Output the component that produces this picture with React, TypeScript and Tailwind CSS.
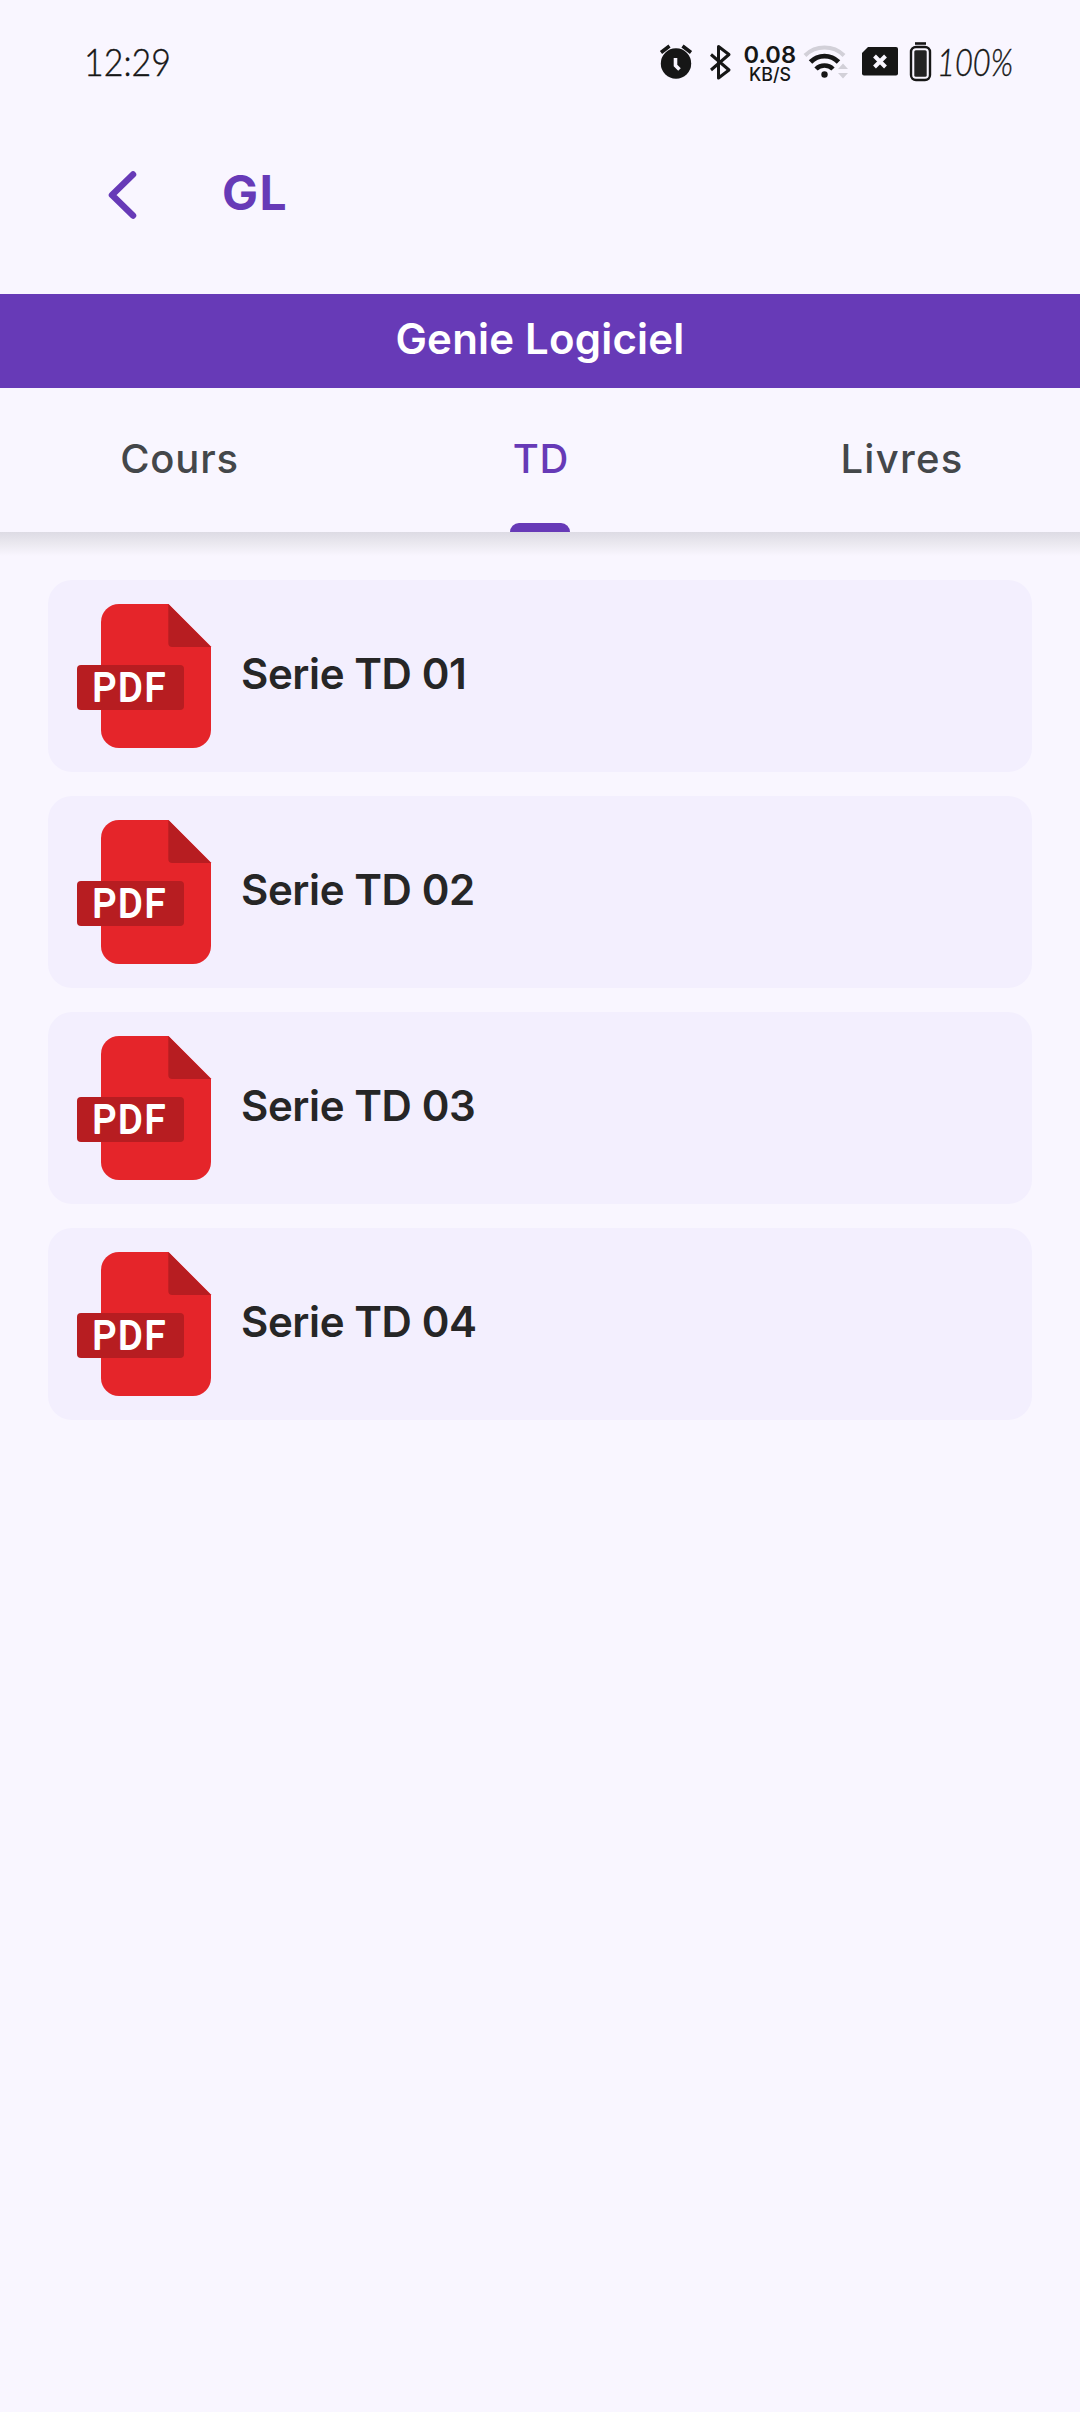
import React from "react";

const series = ["Serie TD 01", "Serie TD 02", "Serie TD 03", "Serie TD 04"];

function StatusIcons() {
  return (
    <svg className="block h-[80px] w-[390px]" viewBox="655 20 390 80" fill="none">
      <g fill="#161616">
        <circle cx="676" cy="63.5" r="15.2" />
        <path d="M661 52.5l8.5-6.5M691 52.5l-8.5-6.5" stroke="#161616" strokeWidth="3.6" />
        <path d="M675.5 58v7.5l4 4" stroke="#f9f6ff" strokeWidth="3.6" />
      </g>
      <path
        d="M711 54.5l18 15.5-10.5 8V46.5l10.5 8-18 15.5"
        stroke="#161616"
        strokeWidth="3"
        strokeLinejoin="round"
      />
      <g fill="#161616" fontFamily="Inter, sans-serif">
        <text x="743.5" y="63" fontSize="23.5" fontWeight="600" textLength="52.5" lengthAdjust="spacingAndGlyphs">0.08</text>
        <text x="749" y="80.500" fontSize="18.5" fontWeight="500" textLength="42" lengthAdjust="spacingAndGlyphs">KB/S</text>
      </g>
      <path d="M805 55.5a28 28 0 0 1 39 0" stroke="#d2d0d8" strokeWidth="4" />
      <path d="M810.500 62a19.5 19.5 0 0 1 28 0" stroke="#161616" strokeWidth="4.8" />
      <path d="M816 69a12 12 0 0 1 17 0" stroke="#161616" strokeWidth="4.6" />
      <circle cx="824.500" cy="74.500" r="3.200" fill="#161616" />
      <path d="M838 69l5-5.500 5 5.500zM838 73h10l-5 5.500z" fill="#d2d0d8" />
      <path d="M868 47h28q2 0 2 2v24.500q0 2-2 2h-32q-2 0-2-2V53z" fill="#161616" />
      <path d="M874.500 56l11 11m0-11l-11 11" stroke="#f9f6ff" strokeWidth="4" />
      <path d="M915 43.500h11" stroke="#161616" strokeWidth="2.600" />
      <rect x="911" y="47" width="19" height="33" rx="5" stroke="#161616" strokeWidth="2.400" />
      <rect x="914.300" y="50.300" width="12.400" height="26.500" rx="1.500" fill="#232323" />
      <text x="937" y="76" fontFamily="Lato, sans-serif" fontStyle="italic" fontWeight="300" fontSize="37" fill="#161616" stroke="#161616" strokeWidth="0.400" textLength="76" lengthAdjust="spacingAndGlyphs">100%</text>
    </svg>
  );
}

function PdfIcon() {
  return (
    <svg className="size-36 shrink-0" viewBox="0 0 144 144">
      <path d="M47 0h49.500L139 42.500V126a18 18 0 0 1-18 18H47a18 18 0 0 1-18-18V18A18 18 0 0 1 47 0z" fill="#e5252a" />
      <path d="M96.300 0L139 43h-38.700a4 4 0 0 1-4-4z" fill="#b71d21" />
      <rect x="5" y="61" width="107" height="45" rx="4" fill="#b71d21" />
      <text x="20.500" y="97.300" fontFamily="Roboto, sans-serif" fontWeight="400" fontSize="38.500" fill="#fff" stroke="#fff" strokeWidth="1.800" strokeLinejoin="round" textLength="75" lengthAdjust="spacingAndGlyphs" letterSpacing="2.5">PDF</text>
    </svg>
  );
}

export default function App() {
  return (
    <div className="flex h-[2412px] w-[1080px] flex-col bg-[#f9f6ff] font-['Inter',sans-serif]">
      <div className="flex h-[124px] items-start justify-between pr-[35px] pl-[84px] pt-[20px]">
        <svg className="block h-[80px] w-[110px]" viewBox="84 20 110 80">
          <text x="84" y="76" fontFamily="Lato, sans-serif" fontWeight="300" fontSize="37" fill="#161616" stroke="#161616" strokeWidth="0.400" textLength="87" lengthAdjust="spacingAndGlyphs">12:29</text>
        </svg>
        <StatusIcons />
      </div>
      <header className="flex h-[170px] items-start pl-[104px] pt-[43px]">
        <svg className="h-[56px] w-[36px]" viewBox="104 167 36 56" fill="none">
          <path d="M133 174.500L112 195l21 20.500" stroke="#673ab7" strokeWidth="6.500" strokeLinecap="round" strokeLinejoin="round" />
        </svg>
        <h1 className="ml-[82px] text-[48px] leading-[52px] font-bold tracking-[1.5px] text-[#673ab7]">GL</h1>
      </header>
      <div className="flex h-[94px] items-center justify-center bg-[#673ab7] pb-[5px]">
        <h2 className="text-[42px] leading-[52px] font-semibold tracking-[0.2px] text-white">Genie Logiciel</h2>
      </div>
      <nav className="relative grid h-[144px] shrink-0 grid-cols-3 text-[40px] font-[450] tracking-[0.8px] text-[#44474a]">
        <div className="flex items-center justify-center pr-px pb-[3px]">Cours</div>
        <div className="relative flex items-center justify-center pb-[3px] pl-[2px] text-[#673ab7]">
          TD
          <span className="absolute bottom-0 left-[150px] h-[9px] w-[60px] rounded-t-[9px] bg-[#673ab7]" />
        </div>
        <div className="flex items-center justify-center pb-[3px] pl-[4px] tracking-[1.3px]">Livres</div>
        <span className="absolute inset-x-0 top-full h-6 bg-gradient-to-b from-[#dddbe4] via-[#ebe9f0] to-[#f9f6ff]" />
      </nav>
      <main className="flex flex-col gap-6 px-12 pt-12">
        {series.map((name) => (
          <div key={name} className="flex h-48 items-center gap-6 rounded-3xl bg-[#f3effe] p-6">
            <PdfIcon />
            <span className="pb-[4px] pl-px text-[42px] leading-[52px] font-semibold tracking-[-0.4px] text-[#262626]">{name}</span>
          </div>
        ))}
      </main>
    </div>
  );
}
